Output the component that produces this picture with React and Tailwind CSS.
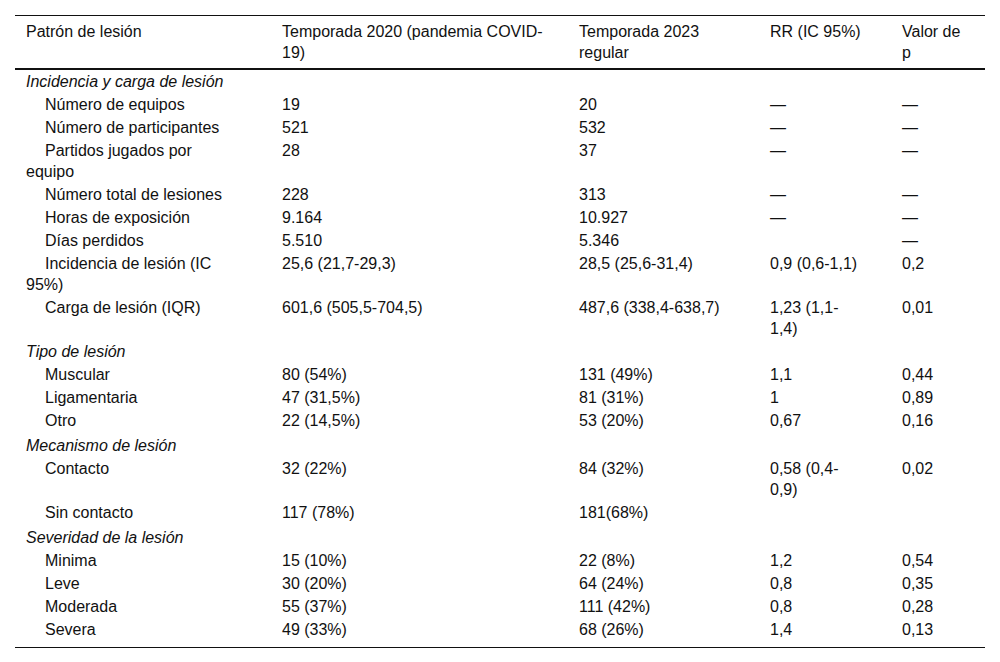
const rows = [
  { group: "Incidencia y carga de lesión" },
  { label: "Número de equipos", a: "19", b: "20", rr: "—", p: "—" },
  { label: "Número de participantes", a: "521", b: "532", rr: "—", p: "—" },
  { label: ["Partidos jugados por", "equipo"], a: "28", b: "37", rr: "—", p: "—" },
  { label: "Número total de lesiones", a: "228", b: "313", rr: "—", p: "—" },
  { label: "Horas de exposición", a: "9.164", b: "10.927", rr: "—", p: "—" },
  { label: "Días perdidos", a: "5.510", b: "5.346", rr: "", p: "—" },
  { label: ["Incidencia de lesión (IC", "95%)"], a: "25,6 (21,7-29,3)", b: "28,5 (25,6-31,4)", rr: "0,9 (0,6-1,1)", p: "0,2" },
  { label: "Carga de lesión (IQR)", a: "601,6 (505,5-704,5)", b: "487,6 (338,4-638,7)", rr: ["1,23 (1,1-", "1,4)"], p: "0,01" },
  { group: "Tipo de lesión" },
  { label: "Muscular", a: "80 (54%)", b: "131 (49%)", rr: "1,1", p: "0,44" },
  { label: "Ligamentaria", a: "47 (31,5%)", b: "81 (31%)", rr: "1", p: "0,89" },
  { label: "Otro", a: "22 (14,5%)", b: "53 (20%)", rr: "0,67", p: "0,16" },
  { group: "Mecanismo de lesión", spaced: true },
  { label: "Contacto", a: "32 (22%)", b: "84 (32%)", rr: ["0,58 (0,4-", "0,9)"], p: "0,02" },
  { label: "Sin contacto", a: "117 (78%)", b: "181(68%)", rr: "", p: "" },
  { group: "Severidad de la lesión", spaced: true },
  { label: "Minima", a: "15 (10%)", b: "22 (8%)", rr: "1,2", p: "0,54" },
  { label: "Leve", a: "30 (20%)", b: "64 (24%)", rr: "0,8", p: "0,35" },
  { label: "Moderada", a: "55 (37%)", b: "111 (42%)", rr: "0,8", p: "0,28" },
  { label: "Severa", a: "49 (33%)", b: "68 (26%)", rr: "1,4", p: "0,13" },
];

function Lines({ value }) {
  if (Array.isArray(value)) {
    return (
      <>
        {value[0]}
        <br />
        {value[1]}
      </>
    );
  }
  return value;
}

export default function App() {
  return (
    <div className="min-h-[662px] bg-white pt-[15px] px-[15px] font-['Liberation_Sans',Arial,sans-serif] text-[16px] leading-[21px] text-[#111]">
      <table className="w-[970px] table-fixed border-collapse">
        <colgroup>
          <col className="w-[256px]" />
          <col className="w-[297px]" />
          <col className="w-[191px]" />
          <col className="w-[132px]" />
          <col className="w-[94px]" />
        </colgroup>
        <thead>
          <tr className="border-t border-b-2 border-t-[#111] border-b-[#111] text-left align-top">
            <th className="pl-[11px] pt-[5px] pb-[5px] font-normal">Patrón de lesión</th>
            <th className="pl-[11px] pt-[5px] pb-[5px] font-normal">
              Temporada 2020 (pandemia COVID-
              <br />
              19)
            </th>
            <th className="pl-[11px] pt-[5px] pb-[5px] font-normal">
              Temporada 2023
              <br />
              regular
            </th>
            <th className="pl-[11px] pt-[5px] pb-[5px] font-normal">RR (IC 95%)</th>
            <th className="pl-[11px] pt-[5px] pb-[5px] font-normal">
              Valor de
              <br />p
            </th>
          </tr>
        </thead>
        <tbody className="border-b border-b-[#111]">
          {rows.map((r, i) => {
            const last = i === rows.length - 1;
            const pad = last ? "pt-[1px] pb-[7px]" : "py-[1px]";
            if (r.group) {
              return (
                <tr key={i}>
                  <td colSpan={5} className={`pl-[11px] italic ${r.spaced ? "pt-[3px] pb-[1px]" : pad}`}>
                    {r.group}
                  </td>
                </tr>
              );
            }
            return (
              <tr key={i} className="align-top">
                <td className={`pl-[11px] indent-[19px] ${pad}`}>
                  <Lines value={r.label} />
                </td>
                <td className={`pl-[11px] ${pad}`}>{r.a}</td>
                <td className={`pl-[11px] ${pad}`}>{r.b}</td>
                <td className={`pl-[11px] ${pad}`}>
                  <Lines value={r.rr} />
                </td>
                <td className={`pl-[11px] ${pad}`}>{r.p}</td>
              </tr>
            );
          })}
        </tbody>
      </table>
    </div>
  );
}
